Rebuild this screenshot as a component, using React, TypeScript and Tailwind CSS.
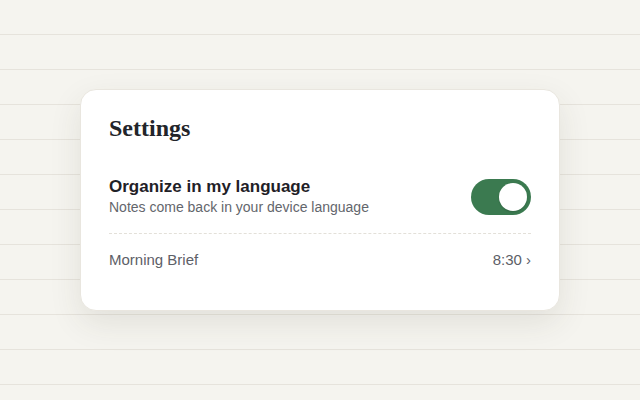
import React, { useState } from 'react';

const sans = "font-['Liberation_Sans',Arial,sans-serif]";

const Toggle = ({ on, onChange }: { on: boolean; onChange: (v: boolean) => void }) => (
  <button
    onClick={() => onChange(!on)}
    className={`relative flex h-9 w-[60px] shrink-0 items-center rounded-full px-1 transition-colors ${
      on ? 'justify-end bg-[#3b7a50]' : 'justify-start bg-[#d9d6cf]'
    }`}
  >
    <span className="h-7 w-7 rounded-full bg-white shadow-[0_1px_2px_rgba(0,0,0,0.15)]" />
  </button>
);

export default function App() {
  const [native, setNative] = useState(true);

  return (
    <div
      className={`flex h-screen w-full items-center justify-center bg-[#f5f4ef] bg-[image:repeating-linear-gradient(to_bottom,transparent_0,transparent_34px,#e6e3dc_34px,#e6e3dc_35px)] ${sans}`}
    >
      <div className="w-[480px] rounded-2xl border border-[#e9e6df] bg-white px-7 pt-6 pb-6 shadow-[0_12px_32px_rgba(60,55,40,0.10)]">
        <h1 className="font-['Liberation_Serif','Times_New_Roman',serif] text-2xl leading-7 font-semibold text-[#22242a]">
          Settings
        </h1>

        <div className="mt-[19px] flex items-center justify-between border-b border-dashed border-[#e3e0d9] py-4">
          <div>
            <p className="text-[17px] leading-5 font-bold text-[#1f2127]">Organize in my language</p>
            <p className="text-sm leading-5 text-[#63666c]">Notes come back in your device language</p>
          </div>
          <Toggle on={native} onChange={setNative} />
        </div>

        <button className="flex w-full items-center justify-between py-4 text-[15px] leading-5 text-[#5d6067]">
          <span>Morning Brief</span>
          <span>8:30 ›</span>
        </button>
      </div>
    </div>
  );
}
